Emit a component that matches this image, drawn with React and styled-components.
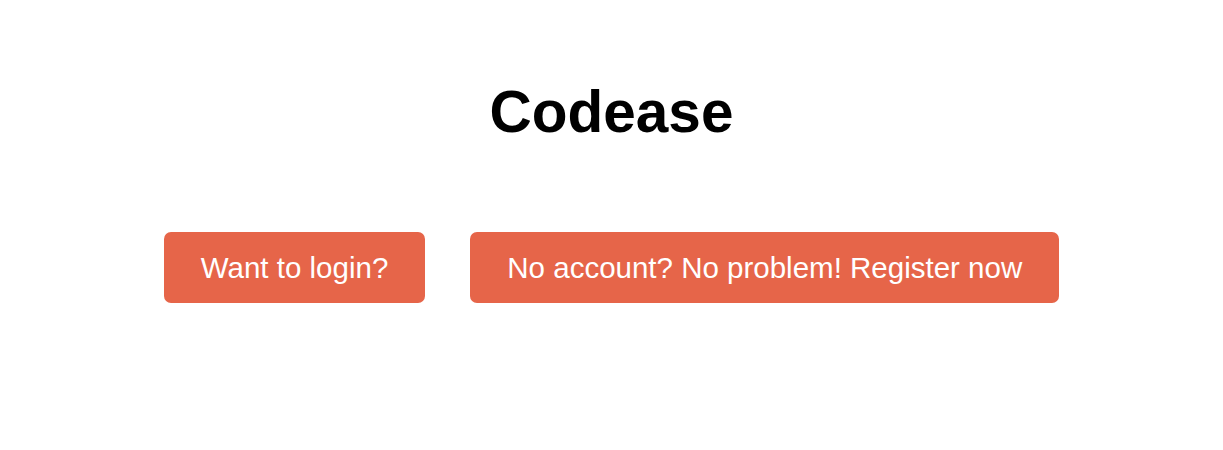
import styled, { createGlobalStyle } from 'styled-components';

const GlobalStyle = createGlobalStyle`
  body {
    margin: 0;
    background: #ffffff;
    font-family: "Liberation Sans", Arial, sans-serif;
  }
`;

const Page = styled.main`
  display: flex;
  flex-direction: column;
  align-items: center;
  padding-top: 78px;
`;

const Title = styled.h1`
  margin: 0;
  font-size: 58.5px;
  line-height: 67px;
  font-weight: 700;
  color: #000;
`;

const Actions = styled.div`
  display: flex;
  gap: 45px;
  margin-top: 87px;
`;

const ActionButton = styled.button`
  height: 71px;
  padding: 0 37px;
  border: none;
  border-radius: 7px;
  background: #e66549;
  color: #ffffff;
  font-family: "Liberation Sans", Arial, sans-serif;
  font-size: 29.5px;
  cursor: pointer;
  white-space: nowrap;

  &:hover {
    background: #d95a3f;
  }
`;

const App = () => {
  return (
    <>
      <GlobalStyle />
      <Page>
        <Title>Codease</Title>
        <Actions>
          <ActionButton>Want to login?</ActionButton>
          <ActionButton>No account? No problem! Register now</ActionButton>
        </Actions>
      </Page>
    </>
  );
};

export default App;
